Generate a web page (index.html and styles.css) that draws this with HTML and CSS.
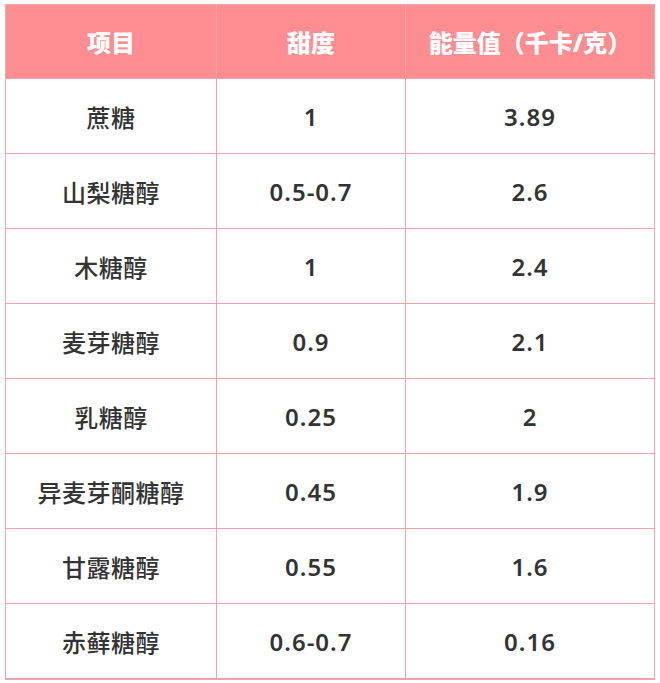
FILE: index.html
```html
<!DOCTYPE html>
<html lang="zh">
<head>
<meta charset="utf-8">
<link rel="stylesheet" href="styles.css">
</head>
<body>
<table class="sweet">
  <colgroup>
    <col class="c1"><col class="c2"><col class="c3">
  </colgroup>
  <thead>
    <tr><th>项目</th><th>甜度</th><th>能量值（千卡/克）</th></tr>
  </thead>
  <tbody>
    <tr><td>蔗糖</td><td>1</td><td>3.89</td></tr>
    <tr><td>山梨糖醇</td><td>0.5-0.7</td><td>2.6</td></tr>
    <tr><td>木糖醇</td><td>1</td><td>2.4</td></tr>
    <tr><td>麦芽糖醇</td><td>0.9</td><td>2.1</td></tr>
    <tr><td>乳糖醇</td><td>0.25</td><td>2</td></tr>
    <tr><td>异麦芽酮糖醇</td><td>0.45</td><td>1.9</td></tr>
    <tr><td>甘露糖醇</td><td>0.55</td><td>1.6</td></tr>
    <tr><td>赤藓糖醇</td><td>0.6-0.7</td><td>0.16</td></tr>
  </tbody>
</table>
</body>
</html>
```
FILE: styles.css
```css
html, body {
  margin: 0;
  padding: 0;
  background: #ffffff;
}
body {
  padding: 4px 0 0 5px;
  font-family: "Noto Sans", "Noto Sans CJK SC", sans-serif;
}
.sweet {
  border-collapse: collapse;
  table-layout: fixed;
  width: 649px;
  border: 1px solid #f3a3a8;
  border-bottom: 2px solid #f3a3a8;
}
.c1 { width: 211px; }
.c2 { width: 189px; }
.c3 { width: 249px; }
.sweet th {
  height: 73px;
  padding: 0;
  background: #fd8d90;
  color: #ffffff;
  font-size: 24px;
  font-weight: 900;
  text-align: center;
  vertical-align: middle;
  border: 1px solid #f7a3a6;
  border-top: none;
}
.sweet td {
  height: 74px;
  padding: 0;
  color: #333333;
  font-size: 24px;
  font-weight: 500;
  letter-spacing: 0.5px;
  text-align: center;
  vertical-align: middle;
  border: 1px solid #f3a3a8;
}
.sweet td:not(:first-child) {
  font-weight: 600;
  letter-spacing: 1px;
}
```
